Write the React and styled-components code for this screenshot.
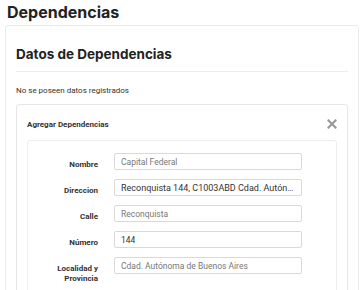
import React from "react";
import styled, { createGlobalStyle } from "styled-components";

const GlobalStyle = createGlobalStyle`
  body {
    margin: 0;
    background: #ffffff;
    font-family: Roboto, "Liberation Sans", sans-serif;
    color: #333333;
  }
`;

const Page = styled.div`
  width: 364px;
  height: 290px;
  overflow: hidden;
  padding: 0 5px;
  box-sizing: border-box;
`;

const PageTitle = styled.h1`
  margin: 0 0 1px 2px;
  font-family: Inter, Roboto, sans-serif;
  font-size: 16px;
  font-weight: 700;
  line-height: 24px;
  color: #222222;
`;

const Card = styled.div`
  border: 1px solid #ebebeb;
  border-radius: 3px;
  padding: 20px 10px 0 10px;
`;

const CardTitle = styled.h2`
  margin: 0;
  padding-bottom: 8px;
  border-bottom: 1px solid #ececec;
  font-family: Inter, Roboto, sans-serif;
  font-size: 13.5px;
  font-weight: 700;
  line-height: 17px;
  color: #222222;
`;

const EmptyText = styled.p`
  margin: 0;
  padding: 14px 0 8px;
  font-size: 8px;
  line-height: 10px;
  color: #333333;
`;

const Panel = styled.div`
  border: 1px solid #e6e6e6;
  border-radius: 3px;
  padding: 0 10px;
`;

const PanelHeader = styled.div`
  display: flex;
  align-items: center;
  justify-content: space-between;
  height: 35px;
  padding-top: 3px;
  box-sizing: border-box;
`;

const PanelTitle = styled.span`
  font-size: 8px;
  font-weight: 700;
  color: #333333;
`;

const CloseButton = styled.button`
  border: 0;
  background: none;
  padding: 0;
  display: flex;
  color: #9a9a9a;
  cursor: pointer;
`;

const FormBox = styled.div`
  border: 1px solid #eeeeee;
  border-radius: 3px;
  padding: 12px 0 20px;
`;

const FormGrid = styled.div`
  display: grid;
  grid-template-columns: 70px 188px;
  column-gap: 16px;
  row-gap: 9px;
  align-items: start;
`;

const Label = styled.label`
  padding-top: 7px;
  font-size: 8px;
  font-weight: 700;
  line-height: 10px;
  text-align: right;
  color: #333333;
`;

const Input = styled.div`
  height: 17px;
  box-sizing: border-box;
  border: 1px solid #d9d9d9;
  border-radius: 2px;
  padding: 0 6px;
  display: flex;
  align-items: center;
  overflow: hidden;
  white-space: nowrap;

  span {
    display: block;
    overflow: hidden;
    text-overflow: ellipsis;
    font-size: ${(p) => (p.$large ? "9px" : "8.5px")};
    color: ${(p) => (p.$muted ? "#777777" : "#333333")};
  }
`;

const fields = [
  { label: "Nombre", value: "Capital Federal", muted: true },
  {
    label: "Direccion",
    value: "Reconquista 144, C1003ABD Cdad. Autónoma de Buenos Aires",
    large: true,
  },
  { label: "Calle", value: "Reconquista", muted: true },
  { label: "Número", value: "144" },
  { label: "Localidad y Provincia", value: "Cdad. Autónoma de Buenos Aires", muted: true },
];

const CloseIcon = () => (
  <svg width="10" height="10" viewBox="0 0 10 10">
    <path d="M1.5 1.5 L8.5 8.5 M8.5 1.5 L1.5 8.5" stroke="currentColor" strokeWidth="2.2" strokeLinecap="square" />
  </svg>
);

export default function App() {
  return (
    <>
      <GlobalStyle />
      <Page>
        <PageTitle>Dependencias</PageTitle>
        <Card>
          <CardTitle>Datos de Dependencias</CardTitle>
          <EmptyText>No se poseen datos registrados</EmptyText>
          <Panel>
            <PanelHeader>
              <PanelTitle>Agregar Dependencias</PanelTitle>
              <CloseButton aria-label="Cerrar">
                <CloseIcon />
              </CloseButton>
            </PanelHeader>
            <FormBox>
              <FormGrid>
                {fields.map((f) => (
                  <React.Fragment key={f.label}>
                    <Label>{f.label}</Label>
                    <Input $muted={f.muted} $large={f.large}>
                      <span>{f.value}</span>
                    </Input>
                  </React.Fragment>
                ))}
              </FormGrid>
            </FormBox>
          </Panel>
        </Card>
      </Page>
    </>
  );
}
